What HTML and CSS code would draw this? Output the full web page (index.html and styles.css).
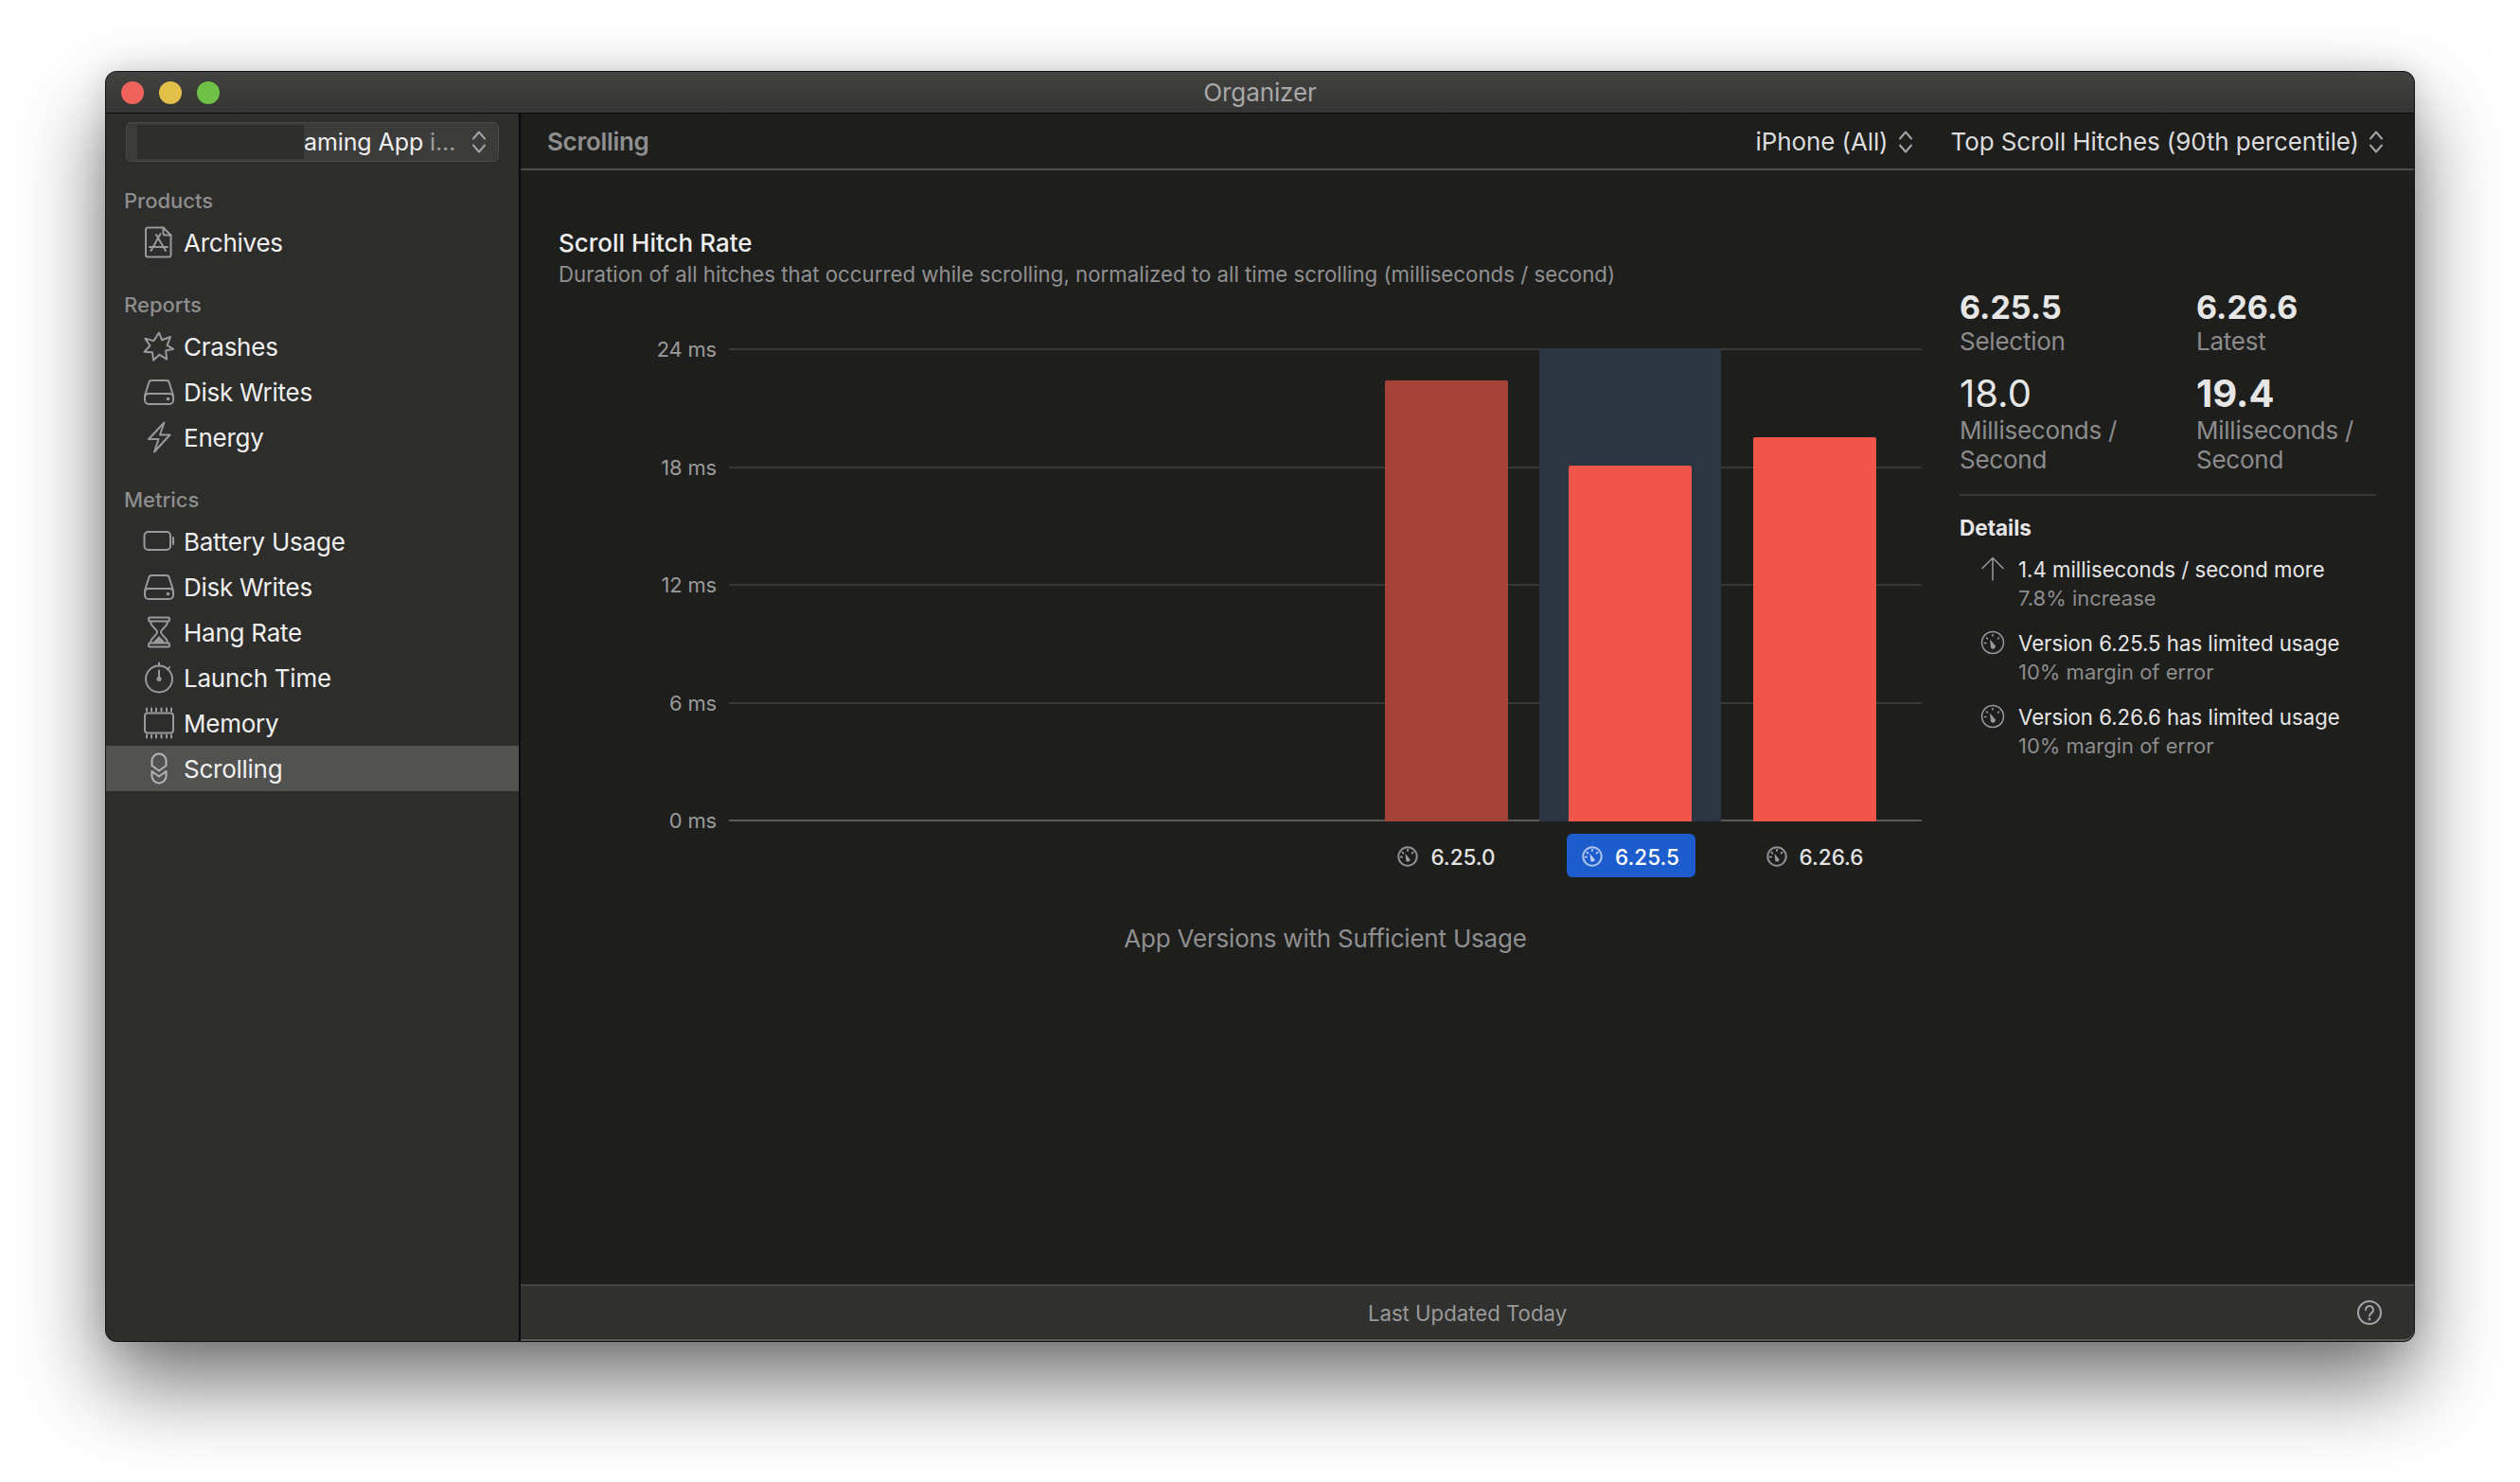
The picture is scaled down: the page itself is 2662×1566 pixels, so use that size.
FILE: index.html
```html
<!DOCTYPE html>
<html lang="en">
<head>
  <meta charset="UTF-8"/>
  <title>Organizer</title>
  <link rel="stylesheet" href="styles.css">
</head>
<body>
  <svg class="defs" width="0" height="0">
    <symbol id="i-archive" viewBox="0 0 34 34">
      <path d="M5 1.500h16.500l8 8v21a2 2 0 0 1-2 2H5a2 2 0 0 1-2-2v-27a2 2 0 0 1 2-2z"/>
      <path d="M21.500 1.500v6a2 2 0 0 0 2 2h6"/>
      <path d="M18.500 8l-10 18M14 9l10 17M7 22h19"/>
    </symbol>
    <symbol id="i-crash" viewBox="0 0 34 34">
      <path d="M17 2.500l3 7.700 9-3.200-3.400 8.800 6.600 4-8.100 1.800 1.100 9-7.900-4.900-6.200 6-1.100-8.400-8.500-.6 6-6.400-5.200-7.500 9 2.300z"/>
    </symbol>
    <symbol id="i-disk" viewBox="0 0 34 34">
      <path d="M2 21l4.200-13.500a3 3 0 0 1 3-2.500h15.600a3 3 0 0 1 3 2.500L32 21"/>
      <rect x="2" y="19" width="30" height="11" rx="4"/>
      <circle class="solid" cx="26.500" cy="24.500" r="1.800"/>
    </symbol>
    <symbol id="i-bolt" viewBox="0 0 34 34">
      <path d="M22.500 1.500L6 19h10.500L12 32.500 28.500 14.500H18z"/>
    </symbol>
    <symbol id="i-battery" viewBox="0 0 34 34">
      <rect x="1.500" y="7" width="27.500" height="19" rx="4"/>
      <path d="M32 13v7"/>
    </symbol>
    <symbol id="i-hourglass" viewBox="0 0 34 34">
      <rect x="6" y="1.500" width="22" height="4" rx="1.500"/>
      <rect x="6" y="28.500" width="22" height="4" rx="1.500"/>
      <path d="M8 5.500c0 6 7 8 7 11.500s-7 5.500-7 11.500M26 5.500c0 6-7 8-7 11.500s7 5.500 7 11.500"/>
      <path class="solid" d="M17 21l7 7.500H10z"/>
    </symbol>
    <symbol id="i-timer" viewBox="0 0 34 34">
      <circle cx="17" cy="18.500" r="14"/>
      <path d="M17 1.500v3M28 6l-2 2.500M17 9.500v9"/>
      <circle class="solid" cx="17" cy="18.500" r="2.500"/>
    </symbol>
    <symbol id="i-memory" viewBox="0 0 34 34">
      <rect x="2" y="6.500" width="30" height="21" rx="3"/>
      <path d="M4 1.500v3M9 1.500v3M14 1.500v3M19.500 1.500v3M25 1.500v3M30 1.500v3M4 29.500v3M9 29.500v3M14 29.500v3M19.500 29.500v3M25 29.500v3M30 29.500v3"/>
    </symbol>
    <symbol id="i-scroll" viewBox="0 0 34 34">
      <path d="M9.500 14V9a7.500 7.500 0 0 1 15 0v5l-7.500 5.500z"/>
      <path d="M9.500 20l7.500 5.500 7.500-5.500v5a7.500 7.500 0 0 1-15 0z"/>
    </symbol>
    <symbol id="i-gauge" viewBox="0 0 26 26">
      <circle cx="13" cy="13" r="11.500"/>
      <path d="M13 4.500v1.500M6.500 8l1 1M19.500 8l-1 1M4.500 13.500H6"/>
      <path class="solid" d="M10 9.500l6 7a2.800 2.800 0 0 1-5 2z"/>
    </symbol>
    <symbol id="i-updown" viewBox="0 0 16 26">
      <path d="M2 9.500l6-7 6 7M2 16.500l6 7 6-7"/>
    </symbol>
  </svg>

  <div class="window">
    <div class="titlebar">
      <div class="lights">
        <span class="light red"></span>
        <span class="light yellow"></span>
        <span class="light green"></span>
      </div>
      <div class="win-title">Organizer</div>
    </div>

    <div class="body">
      <!-- SIDEBAR -->
      <div class="sidebar">
        <div class="app-picker">
          <span class="redacted"></span>
          <span class="app-name">aming App <em>i...</em></span>
          <svg class="updown"><use href="#i-updown"/></svg>
        </div>

        <div class="nav-label">Products</div>
        <div class="nav-row"><svg class="nav-icon"><use href="#i-archive"/></svg>Archives</div>

        <div class="nav-label">Reports</div>
        <div class="nav-row"><svg class="nav-icon"><use href="#i-crash"/></svg>Crashes</div>
        <div class="nav-row"><svg class="nav-icon"><use href="#i-disk"/></svg>Disk Writes</div>
        <div class="nav-row"><svg class="nav-icon"><use href="#i-bolt"/></svg>Energy</div>

        <div class="nav-label">Metrics</div>
        <div class="nav-row"><svg class="nav-icon"><use href="#i-battery"/></svg>Battery Usage</div>
        <div class="nav-row"><svg class="nav-icon"><use href="#i-disk"/></svg>Disk Writes</div>
        <div class="nav-row"><svg class="nav-icon"><use href="#i-hourglass"/></svg>Hang Rate</div>
        <div class="nav-row"><svg class="nav-icon"><use href="#i-timer"/></svg>Launch Time</div>
        <div class="nav-row"><svg class="nav-icon"><use href="#i-memory"/></svg>Memory</div>
        <div class="nav-row active"><svg class="nav-icon"><use href="#i-scroll"/></svg>Scrolling</div>
      </div>

      <!-- MAIN -->
      <div class="main">
        <div class="toolbar">
          <div class="toolbar-title">Scrolling</div>
          <div class="select">iPhone (All)<svg class="updown"><use href="#i-updown"/></svg></div>
          <div class="select">Top Scroll Hitches (90th percentile)<svg class="updown"><use href="#i-updown"/></svg></div>
        </div>

        <div class="content">
          <div class="chart-col">
            <h2 class="chart-title">Scroll Hitch Rate</h2>
            <p class="chart-sub">Duration of all hitches that occurred while scrolling, normalized to all time scrolling (milliseconds / second)</p>

            <div class="chart">
              <div class="axis">
                <span>24 ms</span>
                <span>18 ms</span>
                <span>12 ms</span>
                <span>6 ms</span>
                <span>0 ms</span>
              </div>
              <div class="plot-col">
                <div class="plot">
                  <div class="grid">
                    <i></i><i></i><i></i><i></i><i class="base"></i>
                  </div>
                  <div class="bars">
                    <div class="slot"><div class="bar old" style="height:466px"></div></div>
                    <div class="slot picked"><div class="bar" style="height:376px"></div></div>
                    <div class="slot"><div class="bar" style="height:406px"></div></div>
                  </div>
                </div>
                <div class="versions">
                  <div class="slot-label"><span class="version"><svg class="gauge"><use href="#i-gauge"/></svg>6.25.0</span></div>
                  <div class="slot-label"><span class="version on"><svg class="gauge"><use href="#i-gauge"/></svg>6.25.5</span></div>
                  <div class="slot-label"><span class="version"><svg class="gauge"><use href="#i-gauge"/></svg>6.26.6</span></div>
                </div>
                <div class="caption">App Versions with Sufficient Usage</div>
              </div>
            </div>
          </div>

          <div class="side">
            <div class="stats">
              <div class="stat">
                <div class="stat-ver">6.25.5</div>
                <div class="stat-sub">Selection</div>
              </div>
              <div class="stat">
                <div class="stat-ver">6.26.6</div>
                <div class="stat-sub">Latest</div>
              </div>
              <div class="stat">
                <div class="stat-num">18.0</div>
                <div class="stat-sub">Milliseconds / Second</div>
              </div>
              <div class="stat">
                <div class="stat-num strong">19.4</div>
                <div class="stat-sub">Milliseconds / Second</div>
              </div>
            </div>

            <div class="details-head">Details</div>
            <div class="detail">
              <svg class="detail-icon" viewBox="0 0 26 26"><path d="M13 25V1.500M2 12.500l11-11 11 11"/></svg>
              <div>
                <div class="detail-main">1.4 milliseconds / second more</div>
                <div class="detail-sub">7.8% increase</div>
              </div>
            </div>
            <div class="detail">
              <svg class="detail-icon"><use href="#i-gauge"/></svg>
              <div>
                <div class="detail-main">Version 6.25.5 has limited usage</div>
                <div class="detail-sub">10% margin of error</div>
              </div>
            </div>
            <div class="detail">
              <svg class="detail-icon"><use href="#i-gauge"/></svg>
              <div>
                <div class="detail-main">Version 6.26.6 has limited usage</div>
                <div class="detail-sub">10% margin of error</div>
              </div>
            </div>
          </div>
        </div>

        <div class="footer">
          <span class="updated">Last Updated Today</span>
          <svg class="help" viewBox="0 0 26 26">
            <circle cx="13" cy="13" r="12"/>
            <path d="M9 10a4 4 0 1 1 6.500 3.100c-1.500 1-2.500 1.700-2.500 3.400"/>
            <circle class="dot" cx="13" cy="20" r="1.400"/>
          </svg>
        </div>
      </div>
    </div>
  </div>
</body>
</html>
```

FILE: styles.css
```css
/* page */
html, body {
  margin: 0;
  height: 100%;
}
body {
  background-color: #fff;
  font-family: Inter, "Liberation Sans", sans-serif;
  color: #e6e6e6;
  padding: 75px 111px 0;
  box-sizing: border-box;
  overflow: hidden;
}
.defs {
  position: absolute;
}
svg {
  fill: none;
  stroke: #9a9a9a;
  stroke-width: 2;
  stroke-linecap: round;
  stroke-linejoin: round;
}
symbol .solid {
  fill: currentColor;
  stroke: none;
}

/* window */
.window {
  width: 2440px;
  height: 1343px;
  display: flex;
  flex-direction: column;
  border-radius: 12px;
  box-sizing: border-box;
  border: 1px solid #111;
  background-color: #1e1e1d;
  box-shadow: 0 44px 90px rgba(0, 0, 0, 0.55), 0 0 30px rgba(0, 0, 0, 0.12);
}
.titlebar {
  height: 43px;
  flex: none;
  display: grid;
  grid-template-columns: 1fr auto 1fr;
  align-items: center;
  background: linear-gradient(#424241, #353534);
  border-bottom: 1px solid #0c0c0c;
  border-radius: 11px 11px 0 0;
  box-sizing: content-box;
}
.lights {
  display: flex;
  gap: 16px;
  padding-left: 16px;
}
.light {
  width: 24px;
  height: 24px;
  border-radius: 50%;
}
.red { background-color: #f0635b; }
.yellow { background-color: #e2c04a; }
.green { background-color: #6fc047; }
.win-title {
  font-size: 26px;
  letter-spacing: -0.1px;
  color: #a8a8a8;
}

.body {
  flex: 1;
  display: flex;
  min-height: 0;
}

/* sidebar */
.sidebar {
  width: 436px;
  flex: none;
  background-color: #2d2d2c;
  border-right: 2px solid #0a0a0a;
  border-radius: 0 0 0 11px;
  box-sizing: content-box;
  padding-top: 9px;
}
.app-picker {
  margin: 0 21px;
  height: 42px;
  box-sizing: border-box;
  background-color: #3b3b3a;
  border: 1px solid #4a4a49;
  border-radius: 6px;
  display: flex;
  align-items: center;
  padding: 0 12px 0 11px;
  font-size: 25px;
  letter-spacing: -0.1px;
  color: #eee;
}
.redacted {
  width: 176px;
  height: 36px;
  background-color: #2d2d2c;
  flex: none;
}
.app-name em {
  font-style: normal;
  color: #a0a0a0;
}
.app-name {
  flex: 1;
  white-space: nowrap;
}
.updown {
  width: 16px;
  height: 26px;
  flex: none;
  stroke: #a5a5a5;
}
.nav-label {
  margin: 27px 0 6px 19px;
  font-size: 22px;
  font-weight: 500;
  line-height: 28px;
  color: #8e8e8e;
}
.nav-row + .nav-label {
  margin-top: 28px;
}
.nav-row {
  height: 48px;
  display: flex;
  align-items: center;
  gap: 9px;
  padding-left: 39px;
  font-size: 26px;
  letter-spacing: -0.25px;
  color: #f0f0f0;
}
.nav-row.active {
  background-color: #525251;
}
.nav-icon {
  width: 34px;
  height: 34px;
  color: #9a9a9a;
  flex: none;
}
.nav-row.active .nav-icon {
  stroke: #b5b5b5;
}

/* main */
.main {
  flex: 1;
  min-width: 0;
  display: flex;
  flex-direction: column;
}
.toolbar {
  height: 60px;
  flex: none;
  box-sizing: border-box;
  border-bottom: 2px solid #4d4d4c;
  display: flex;
  align-items: center;
  gap: 40px;
  padding: 1px 32px 0 28px;
  font-size: 26px;
  letter-spacing: -0.1px;
  color: #dcdcdc;
}
.toolbar-title {
  flex: 1;
  font-weight: 600;
  letter-spacing: -0.3px;
  color: #8f8f8f;
}
.select {
  display: flex;
  align-items: center;
  gap: 10px;
}

.content {
  flex: 1;
  display: flex;
  min-height: 0;
}
.chart-col {
  flex: 1;
  padding: 61px 0 0 40px;
  min-width: 0;
}
.chart-title {
  margin: 0;
  font-size: 26px;
  font-weight: 500;
  line-height: 32px;
  color: #eee;
}
.chart-sub {
  margin: 3px 0 0;
  font-size: 22.25px;
  line-height: 28px;
  color: #909090;
  white-space: nowrap;
}

/* chart */
.chart {
  display: flex;
  margin-top: 64px;
}
.axis {
  width: 167px;
  height: 526px;
  margin-top: -13px;
  display: flex;
  flex-direction: column;
  justify-content: space-between;
  align-items: flex-end;
  font-size: 22px;
  letter-spacing: -0.2px;
  line-height: 28px;
  color: #9a9a9a;
}
.plot-col {
  margin-left: 13px;
  width: 1260px;
}
.plot {
  position: relative;
  height: 500px;
}
.grid {
  position: absolute;
  inset: 0;
  display: flex;
  flex-direction: column;
  justify-content: space-between;
}
.grid i {
  display: block;
  height: 2px;
  background-color: #383837;
}
.grid i.base {
  background-color: #5a5a59;
}
.bars {
  position: relative;
  height: 100%;
  display: flex;
  justify-content: flex-end;
  align-items: flex-end;
  gap: 1.5px;
  padding-right: 17px;
}
.slot {
  width: 192px;
  height: 100%;
  display: flex;
  justify-content: center;
  align-items: flex-end;
}
.slot.picked {
  background-color: #2c3643;
  margin-right: 2px;
}
.bar {
  width: 130px;
  background-color: #ef5649;
  border-radius: 2px 2px 0 0;
}
.bar.old {
  background-color: #a54338;
}
.versions {
  display: flex;
  justify-content: flex-end;
  gap: 2.5px;
  padding-right: 17px;
  margin-top: 13px;
}
.slot-label {
  width: 192px;
  display: flex;
  justify-content: center;
}
.version {
  height: 46px;
  width: 136px;
  box-sizing: border-box;
  padding-top: 2px;
  border-radius: 6px;
  display: flex;
  align-items: center;
  justify-content: center;
  gap: 13px;
  font-size: 22.5px;
  font-weight: 500;
  color: #e2e2e2;
}
.version.on {
  background-color: #1c5ccc;
  color: #fff;
}
.gauge {
  width: 22px;
  height: 22px;
  color: #9a9a9a;
  stroke: #8f8f8f;
  stroke-width: 2.4;
}
.version.on .gauge {
  color: #b8cdf2;
  stroke: #a9c3ee;
}
.caption {
  margin-top: 49px;
  text-align: center;
  font-size: 26px;
  letter-spacing: -0.2px;
  line-height: 32px;
  color: #8f8f8f;
}

/* right column */
.side {
  width: 480px;
  flex: none;
  box-sizing: border-box;
  padding: 127px 40px 0 0;
}
.stats {
  display: grid;
  grid-template-columns: 210px 190px;
  column-gap: 40px;
  row-gap: 18px;
  padding-bottom: 21px;
  border-bottom: 2px solid #383837;
}
.stat-ver {
  font-size: 34px;
  font-weight: 700;
  line-height: 36px;
  margin-bottom: 2px;
}
.stat-num {
  font-size: 40px;
  font-weight: 400;
  line-height: 44px;
  margin-bottom: 1px;
}
.stat-num.strong {
  font-weight: 700;
}
.stat-sub {
  font-size: 26px;
  letter-spacing: -0.25px;
  line-height: 31px;
  color: #8c8c8c;
}
.details-head {
  margin-top: 20px;
  font-size: 22.5px;
  font-weight: 700;
  line-height: 28px;
}
.detail {
  display: flex;
  gap: 9px;
  padding-left: 17px;
  margin-bottom: 18px;
}
.details-head + .detail {
  margin-top: 15px;
}
.detail-icon {
  width: 36px;
  height: 36px;
  flex: none;
  color: #9a9a9a;
  stroke: #9a9a9a;
  stroke-width: 1.5;
  padding: 5px;
  box-sizing: border-box;
  margin-top: -4px;
}
.detail-main {
  font-size: 22.2px;
  line-height: 30px;
  color: #e6e6e6;
  white-space: nowrap;
}
.detail-sub {
  font-size: 22px;
  line-height: 30px;
  color: #8c8c8c;
  white-space: nowrap;
}

/* footer */
.footer {
  height: 60px;
  flex: none;
  box-sizing: border-box;
  background-color: #30302f;
  border-top: 2px solid #454544;
  border-bottom: 2px solid #5a5a59;
  border-radius: 0 0 11px 0;
  display: flex;
  align-items: center;
  padding: 0 34px 0 0;
  font-size: 22.2px;
  color: #9a9a9a;
}
.updated {
  flex: 1;
  text-align: center;
  padding-left: 60px;
}
.help {
  width: 26px;
  height: 26px;
  stroke: #a5a5a5;
}
.help .dot {
  fill: #a5a5a5;
  stroke: none;
}
```
